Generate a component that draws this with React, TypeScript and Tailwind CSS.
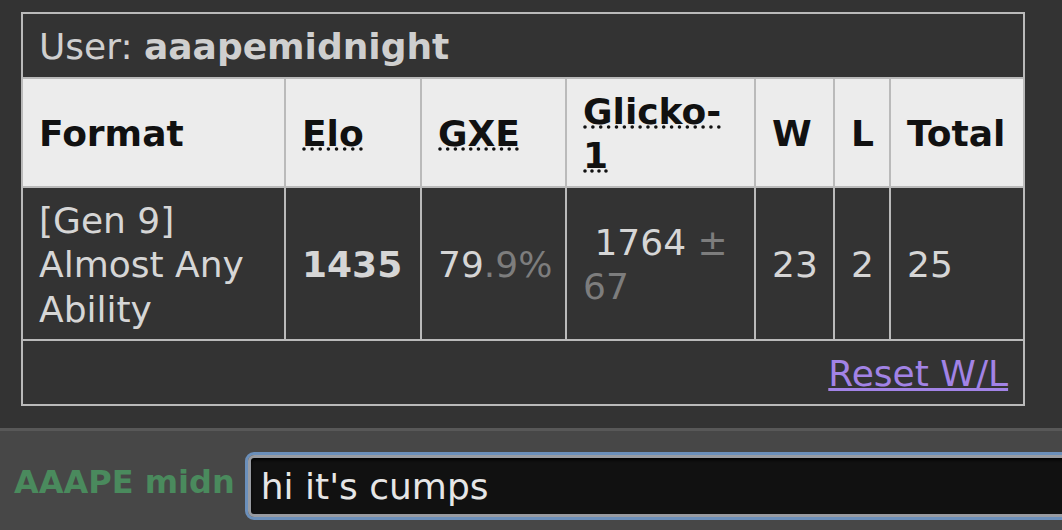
import React from 'react';

type Rating = {
  format: string;
  elo: number;
  gxe: [string, string];
  glicko: string;
  deviation: string;
  wins: number;
  losses: number;
};

const rating: Rating = {
  format: '[Gen 9] Almost Any Ability',
  elo: 1435,
  gxe: ['79', '.9%'],
  glicko: '1764',
  deviation: '67',
  wins: 23,
  losses: 2,
};

const cell = 'border-2 border-[#bababa] px-[16px] pt-[11px] pb-[7px] align-middle text-left';

const App = () => {
  return (
    <div className="w-[1062px] h-[530px] overflow-hidden flex flex-col bg-[#333] font-['DejaVu_Sans',sans-serif] text-[36px] leading-[44.5px]">
      <div className="pt-[12px] pl-[21px] pb-[22px]">
        <table className="w-[1004px] table-fixed border-collapse border-2 border-[#bababa]">
          <colgroup>
            <col className="w-[263px]" />
            <col className="w-[136px]" />
            <col className="w-[145px]" />
            <col className="w-[189px]" />
            <col className="w-[79px]" />
            <col className="w-[56px]" />
            <col className="w-[134px]" />
          </colgroup>
          <tbody>
            <tr>
              <td colSpan={7} className={`${cell} text-[#cfcfcf]`}>
                User: <strong className="font-bold">aaapemidnight</strong>
              </td>
            </tr>
            <tr className="bg-[#ececec] text-[#111]">
              <th className={`${cell} font-bold`}>Format</th>
              <th className={`${cell} font-bold`}>
                <abbr title="Elo rating">Elo</abbr>
              </th>
              <th className={`${cell} font-bold`}>
                <abbr title="user's percentage chance of winning a random battle">GXE</abbr>
              </th>
              <th className={`${cell} font-bold`}>
                <abbr title="Glicko-1 rating system: rating ± deviation">Glicko-1</abbr>
              </th>
              <th className={`${cell} font-bold`}>W</th>
              <th className={`${cell} font-bold`}>L</th>
              <th className={`${cell} font-bold`}>Total</th>
            </tr>
            <tr className="text-[#d6d6d6]">
              <td className={cell}>{rating.format}</td>
              <td className={`${cell} font-bold`}>{rating.elo}</td>
              <td className={`${cell} whitespace-nowrap`}>
                {rating.gxe[0]}
                <span className="text-[#7d7d7d]">{rating.gxe[1]}</span>
              </td>
              <td className={cell}>
                {'\u00a0'}
                {rating.glicko} <span className="text-[#7d7d7d]">± {rating.deviation}</span>
              </td>
              <td className={cell}>{rating.wins}</td>
              <td className={cell}>{rating.losses}</td>
              <td className={cell}>{rating.wins + rating.losses}</td>
            </tr>
            <tr>
              <td colSpan={7} className={`${cell} text-right pr-[15px]`}>
                <a href="#" className="text-[#a283e6] underline">
                  Reset W/L
                </a>
              </td>
            </tr>
          </tbody>
        </table>
      </div>
      <div className="flex-1 border-t-[3px] border-[#585858] bg-[#474747] pt-[21px] pl-[14px] flex items-start gap-[10px]">
        <span className="mt-[11px] text-[32px] leading-[38px] font-bold text-[#4a8a5d] whitespace-nowrap">
          AAAPE midn
        </span>
        <div className="flex-1 -mr-[20px] rounded-[9px] border-[3px] border-[#6b8fba]">
          <div className="h-[62px] rounded-[6px] border-[3px] border-[#989ba1] bg-[#111] shadow-[inset_0_2px_3px_#000] pl-[10px] pt-[4px] flex items-center text-[#e6e6e6]">
            hi it's cumps
          </div>
        </div>
      </div>
    </div>
  );
};

export default App;
